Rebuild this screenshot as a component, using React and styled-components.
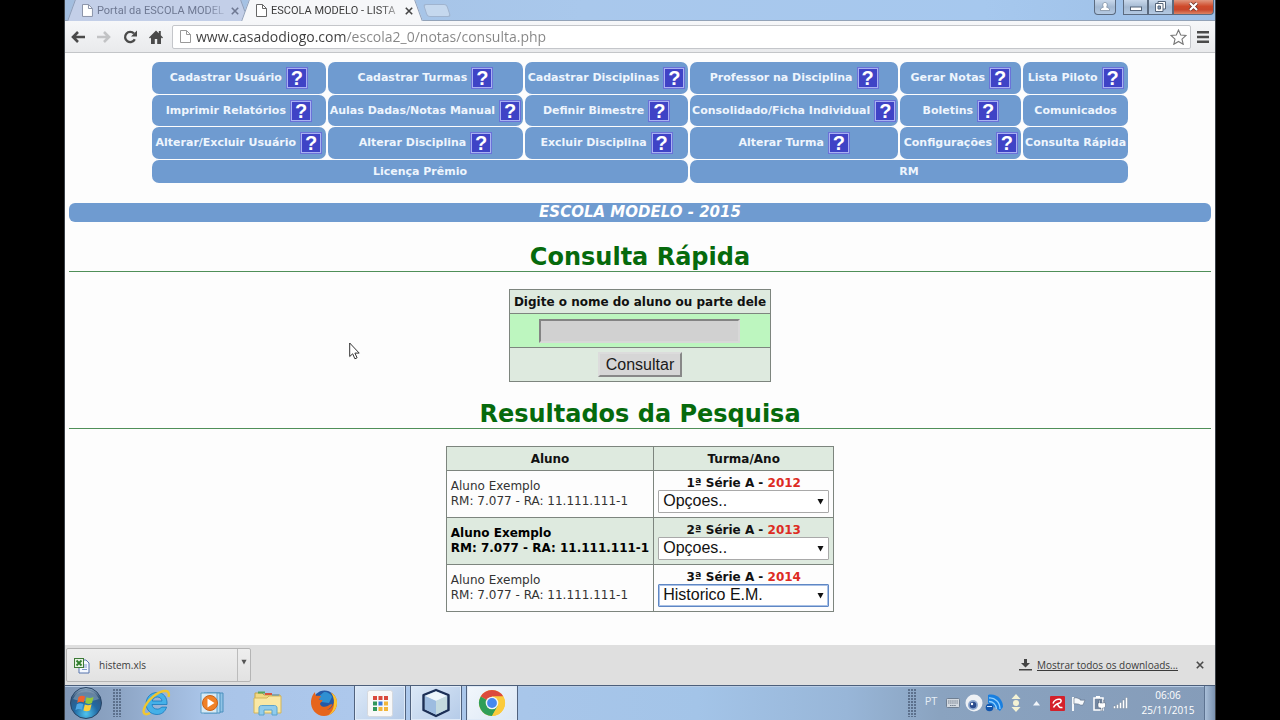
import React, { useState } from "react";
import styled, { createGlobalStyle, css } from "styled-components";

const verdana = `Verdana, "DejaVu Sans", sans-serif`;
const segoe = `"Segoe UI", "Open Sans", sans-serif`;
const arial = `Arial, "Liberation Sans", sans-serif`;

const GlobalStyle = createGlobalStyle`
  * { box-sizing: border-box; }
  body { margin: 0; background: #000; font-family: ${verdana}; }
  button, input, select { font-family: inherit; margin: 0; }
`;

const Screen = styled.div`
  display: flex;
  flex-direction: column;
  min-height: 100vh;
  margin: 0 5%;
  padding: 0 1px;
  background: #3a3f45;
`;

/* ---------- browser chrome ---------- */

const TabStrip = styled.header`
  display: flex;
  align-items: flex-start;
  height: 21px;
  padding-left: 6px;
  background: linear-gradient(90deg, #a3bedf, #a9c8ec 45%, #a6c8ee 80%, #9dbfe6);
  box-shadow: inset 0 -1px #93a3b8;
  overflow: hidden;
`;

const Tab = styled.div`
  position: relative;
  z-index: ${(p) => (p.$active ? 1 : 0)};
  display: flex;
  align-items: center;
  gap: 4px;
  width: 174px;
  height: 21px;
  padding: 0 3px 0 11px;
  color: ${(p) => (p.$active ? "#3c3c3c" : "#6e7892")};

  &::before,
  &::after {
    content: "";
    position: absolute;
    z-index: -1;
    top: 0;
    bottom: 0;
    width: 55%;
    background: ${(p) => (p.$active ? "#f6f7f9" : "#c3cfe8")};
  }
  &::before {
    left: 0;
    transform: skewX(-20deg);
    border-left: 1px solid #8c9db8;
  }
  &::after {
    right: 0;
    transform: skewX(20deg);
    border-right: 1px solid #8c9db8;
  }
`;

const TabTitle = styled.a`
  flex: 1;
  white-space: nowrap;
  font: 11px/20px "Segoe UI", Roboto, sans-serif;
  color: inherit;
  text-decoration: none;
  mask-image: linear-gradient(90deg, #000 86%, rgba(0, 0, 0, 0.3));
`;

const IconButton = styled.button`
  display: flex;
  align-items: center;
  justify-content: center;
  flex: none;
  width: ${(p) => p.$size}px;
  height: ${(p) => p.$size}px;
  padding: 0;
  border: 0;
  background: none;
  color: ${(p) => p.$tone || "#4a4a4a"};
`;

const NewTab = styled.button`
  width: 24px;
  height: 13px;
  margin: 4px 0 0 6px;
  padding: 0;
  border: 1px solid #a0b4cf;
  border-radius: 3px;
  background: #c5d8ee;
  transform: skewX(18deg);
`;

const WindowControls = styled.div`
  display: flex;
  margin-left: auto;
  padding-right: 1px;
`;

const WindowButton = styled.button`
  display: flex;
  align-items: center;
  justify-content: center;
  width: ${(p) => (p.$close ? 41 : p.$user ? 22 : 25)}px;
  height: 15px;
  margin-right: ${(p) => (p.$user ? 7 : 0)}px;
  padding: 0 0 2px;
  border: 1px solid #5b6b80;
  border-top: 0;
  border-radius: ${(p) => (p.$user ? "0 0 4px 4px" : p.$close ? "0 0 4px 0" : "0")};
  background: ${(p) =>
    p.$close
      ? "linear-gradient(#e0977f, #cf4a2b 45%, #c8472c 70%, #dc8566)"
      : "linear-gradient(#c9d9ec, #a4b9d2 50%, #b3c9e2)"};
`;

const Toolbar = styled.nav`
  display: flex;
  align-items: center;
  height: 32px;
  padding: 0 0 0 5px;
  background: linear-gradient(#f6f7f9, #e9eaec);
  border-bottom: 1px solid #c3c5c8;
`;

const NavButtons = styled.div`
  display: flex;
  gap: 10px;
  margin-right: 8px;
`;

const AddressBar = styled.label`
  display: flex;
  flex: 1;
  align-items: center;
  gap: 5px;
  height: 24px;
  padding: 0 3px 0 7px;
  border: 1px solid #c4c6ca;
  border-radius: 2px;
  background: #fff;
`;

const Address = styled.input`
  flex: 1;
  min-width: 0;
  height: 20px;
  padding: 0;
  border: 0;
  outline: 0;
  font: 14px/20px ${segoe};
  color: #444;
  background: linear-gradient(90deg, #3c3c3c 150px, #858585 150px);
  -webkit-background-clip: text;
  background-clip: text;
  -webkit-text-fill-color: transparent;
`;

/* ---------- page ---------- */

const Page = styled.main`
  position: relative;
  flex: 1;
  padding: 9px 4px 16px;
  background: #fdfdfd;
`;

const Menu = styled.nav`
  display: grid;
  grid-template-columns: 174fr 196fr 163fr 209fr 121fr 105fr;
  grid-template-rows: 32px 31px 32px 23px;
  gap: 1px 2px;
  max-width: 976px;
  margin: 0 auto 20px;
`;

const MenuCell = styled.div`
  display: flex;
  align-items: center;
  justify-content: center;
  gap: 4px;
  grid-column: span ${(p) => p.$span || 1};
  border-radius: 7px;
  background: #6f9bd0;
`;

const MenuLink = styled.a`
  font-size: 11px;
  font-weight: bold;
  line-height: 16px;
  white-space: nowrap;
  color: #eef5fd;
  text-decoration: none;
`;

const HelpButton = styled.button`
  width: 22px;
  height: 22px;
  padding: 0;
  border: 1px solid #6a72d8;
  box-shadow: inset 0 0 0 1px #a9b0f2;
  background: #3f43c6;
  font: bold 20px/20px ${arial};
  color: #fff;
`;

const SchoolBar = styled.div`
  height: 19px;
  margin-bottom: 19px;
  border-radius: 6px;
  background: #6f9bd0;
  text-align: center;
  font-size: 15px;
  font-style: italic;
  font-weight: bold;
  line-height: 19px;
  color: #fff;
`;

const Heading = styled.h1`
  height: 31px;
  margin: 0 0 17px;
  border-bottom: 1px solid #4f8f58;
  text-align: center;
  font-size: 24px;
  line-height: 32px;
  color: #066a0c;
`;

const DataTable = styled.table`
  margin: 0 auto 16px;
  border-collapse: collapse;
  font-size: 12px;
  line-height: 14px;
  color: #111;

  th,
  td {
    padding: 0 4px;
    border: 1px solid #7d857e;
  }
  th {
    height: 24px;
    background: #deeadf;
  }
`;

const FormCell = styled.td`
  height: 34px;
  text-align: center;
  background: ${(p) => (p.$field ? "#bdf6bf" : "#deeadf")};
`;

const NameInput = styled.input`
  display: block;
  width: 201px;
  height: 24px;
  margin: 0 auto;
  padding: 0 3px;
  border: 2px inset #d8d8d8;
  background: #d1d1d1;
  font: 16px ${arial};
`;

const SubmitButton = styled.button`
  display: block;
  width: 84px;
  height: 25px;
  margin: 0 auto;
  padding: 0;
  border: 2px outset #dcdcdc;
  background: #d6d6d6;
  font: 16px/20px ${arial};
  color: #1a1a1a;
`;

const ResultRow = styled.tr`
  height: 47px;
  background: ${(p) => (p.$highlight ? "#deeadf" : "#fdfdfd")};
`;

const StudentCell = styled.td`
  width: 206px;
  white-space: nowrap;
  line-height: 15px;
  ${(p) =>
    p.$highlight
      ? css`
          font-weight: bold;
          color: #000;
        `
      : css`
          color: #333;
        `}
`;

const ClassCell = styled.td`
  width: 180px;
  text-align: center;
`;

const ClassLabel = styled.label`
  display: block;
  font-weight: bold;
`;

const Year = styled.span`
  color: #dd2a22;
`;

const SelectBox = styled.div`
  display: grid;
  align-items: center;

  > * {
    grid-area: 1 / 1;
  }
  > svg {
    justify-self: end;
    margin-right: 5px;
    pointer-events: none;
  }
`;

const Select = styled.select`
  appearance: none;
  width: 100%;
  height: 23px;
  padding: 0 20px 0 4px;
  border: 1px solid ${(p) => (p.$focused ? "#5f87c4" : "#a9a9a9")};
  box-shadow: ${(p) => (p.$focused ? "inset 0 0 0 1px #a9c1e6" : "none")};
  border-radius: 1px;
  outline: 0;
  background: #fff;
  font: 16px/20px ${arial};
  color: #111;
`;

const Pointer = styled.svg`
  position: absolute;
  left: 284px;
  top: 289px;
`;

/* ---------- download shelf ---------- */

const Shelf = styled.section`
  display: flex;
  align-items: center;
  height: 40px;
  padding: 0 8px 0 1px;
  background: #dfdfdf;
`;

const Download = styled.div`
  display: flex;
  width: 185px;
  height: 34px;
  border: 1px solid #b4b4b4;
  border-radius: 2px;
  background: linear-gradient(#eeeeee, #e2e2e2);
`;

const DownloadFile = styled.button`
  display: flex;
  flex: 1;
  align-items: center;
  gap: 9px;
  padding: 0 6px;
  border: 0;
  border-right: 1px solid #bcbcbc;
  background: none;
  font: 10px/16px ${segoe};
  color: #3b3b3b;
`;

const DownloadMenu = styled.button`
  width: 12px;
  padding: 0 0 9px;
  border: 0;
  background: none;
`;

const ShelfLink = styled.a`
  display: flex;
  align-items: center;
  gap: 5px;
  margin: 0 15px 0 auto;
  font: 10px/16px ${segoe};
  color: #3b3b3b;
`;

/* ---------- taskbar ---------- */

const Taskbar = styled.footer`
  display: flex;
  align-items: center;
  height: 35px;
  border-top: 1px solid #4c5f7b;
  box-shadow: inset 0 1px #b9cde6;
  background: linear-gradient(90deg, #8097b5 0, #8ea6c6 5%, #a9c4e8 12%, #adc8ec 25%, #a3c4e8 55%, #98b6d8 68%, #8aa3c0 76%, #859cb9);
`;

const StartButton = styled.button`
  display: flex;
  width: 34px;
  height: 34px;
  margin: 0 10px 0 4px;
  padding: 0;
  border: 0;
  background: none;
`;

const Grip = styled.div`
  width: 9px;
  height: 28px;
  background: radial-gradient(circle at 1px 1px, #5c708c 1px, transparent 1px) 0 0 / 3px 3px;
`;

const Apps = styled.div`
  display: flex;
  gap: 4px;
  margin-left: 8px;
`;

const AppButton = styled.button`
  display: flex;
  align-items: center;
  justify-content: center;
  width: 52px;
  height: 34px;
  padding: 0;
  border: 0 solid #50627e;
  border-width: ${(p) => (p.$open ? "0 1px" : "0")};
  box-shadow: ${(p) => (p.$open ? "inset 0 0 0 1px #dfeaf7" : "none")};
  background: ${(p) =>
    p.$current
      ? "linear-gradient(135deg, #f2f7fc, #dbe7f5)"
      : p.$open
        ? "linear-gradient(135deg, #dbe8f7, #b5cbe8)"
        : "none"};
`;

const Tray = styled.div`
  display: flex;
  align-items: center;
  gap: 2px;
  margin-left: auto;
`;

const Language = styled.button`
  width: 22px;
  padding: 0 0 4px 2px;
  border: 0;
  background: none;
  font: 11px/14px ${segoe};
  color: #e4ecf5;
`;

const Clock = styled.time`
  display: block;
  width: 68px;
  margin-left: 2px;
  text-align: center;
  white-space: pre-line;
  font: 10px/15px ${segoe};
  color: #fff;
`;

const ShowDesktop = styled.button`
  width: 11px;
  height: 34px;
  padding: 0;
  border: 0;
  border-left: 1px solid #5d7391;
  background: linear-gradient(90deg, #a9bfd9, #7b92b0);
`;

/* ---------- drawings ---------- */

const PageIcon = ({ tone = "#777" }) => (
  <svg width="11" height="13" viewBox="0 0 11 13" fill="#fff" stroke={tone}>
    <path d="M.5.5h6l4 4v8H.5z" />
    <path d="M6.5.5v4h4" fill="none" />
  </svg>
);

const CloseIcon = () => (
  <svg width="8" height="8" viewBox="0 0 8 8" stroke="currentColor" strokeWidth="1.6">
    <path d="M.8.8l6.4 6.4M7.2.8L.8 7.2" />
  </svg>
);

const ArrowIcon = ({ flip }) => (
  <svg width="14" height="12" viewBox="0 0 14 12" fill="none" stroke="currentColor" strokeWidth="2.600">
    <path d={flip ? "M0 6h12M7 1l5 5-5 5" : "M14 6H2M7 1L2 6l5 5"} />
  </svg>
);

const ReloadIcon = () => (
  <svg width="15" height="14" viewBox="0 0 15 14" fill="none">
    <path d="M11.8 9.2A5.1 5.1 0 1 1 11 3.6" stroke="currentColor" strokeWidth="2.3" />
    <path d="M14 .5v6H8z" fill="currentColor" />
  </svg>
);

const HomeIcon = () => (
  <svg width="14" height="14" viewBox="0 0 14 14" fill="currentColor">
    <path d="M7 .5L0 7.4l1 1 1-.9V14h3.800V9h2.400v5H12V7.500l1 .9 1-1-2.200-2.200V1H9.800v2.300z" />
  </svg>
);

const StarIcon = () => (
  <svg width="17" height="16" viewBox="0 0 17 16" fill="#fff" stroke="#777" strokeWidth="1.1">
    <path d="M8.500 1l2.200 5 5.300.5-4 3.600 1.200 5.200-4.700-2.800-4.700 2.800L5 10.100 1 6.500 6.300 6z" />
  </svg>
);

const BarsIcon = () => (
  <svg width="12" height="12" viewBox="0 0 12 12" fill="#4a4a4a">
    <path d="M0 0h12v2.500H0zM0 4.700h12v2.500H0zM0 9.400h12v2.500H0z" />
  </svg>
);

const DownTriangle = ({ size = 7, tone = "#111" }) => (
  <svg width={size} height={size} viewBox="0 0 7 7" fill={tone}>
    <path d="M.5 1h6L3.500 6.500z" />
  </svg>
);

const ExcelIcon = () => (
  <svg width="17" height="17" viewBox="0 0 17 17">
    <path d="M6 3h7l3 3v10H6z" fill="#f4f8ff" stroke="#5674ad" />
    <path d="M11 8h3M11 10h3M9 12.500h5" stroke="#7f9acb" />
    <rect x="1.500" y="1.500" width="9" height="9" fill="#e6f3e2" stroke="#3d7a37" />
    <path d="M3.500 3.500l5 5M8.500 3.500l-5 5" stroke="#2f7d2c" strokeWidth="1.800" />
  </svg>
);

const SaveIcon = () => (
  <svg width="13" height="12" viewBox="0 0 13 12" fill="#444">
    <path d="M5 0h3v4h3L6.500 8.500 2 4h3zM0 10h13v1.600H0z" />
  </svg>
);

const StartOrb = () => (
  <svg width="34" height="34" viewBox="0 0 34 34">
    <defs>
      <radialGradient id="orb" cx=".5" cy=".85" r=".85">
        <stop offset="0" stopColor="#4fc4ee" />
        <stop offset=".45" stopColor="#2169a3" />
        <stop offset=".8" stopColor="#33587f" />
        <stop offset="1" stopColor="#9fb6cc" />
      </radialGradient>
    </defs>
    <circle cx="17" cy="17" r="15.500" fill="url(#orb)" stroke="#2a4566" />
    <path d="M4 13a14 14 0 0 1 26 0c-8 3-18 3-26 0z" fill="#fff" opacity=".25" />
    <path d="M9.500 11c2.300-1.600 4.500-1.500 6.600-.4L14.700 16.500c-2.200-1-4.300-1-6.500.4z" fill="#ee6330" />
    <path d="M17.500 11.200c2.300 1 4.300 1 7-.3l-1.500 6c-2.200 1.300-4.400 1.300-6.800.2z" fill="#94c83c" />
    <path d="M7.800 18.300c2.200-1.400 4.300-1.400 6.500-.4l-1.400 5.900c-2.200-1-4.300-1-6.500.4z" fill="#4fa8e4" />
    <path d="M15.800 18.500c2.300 1 4.400 1 6.800-.2l-1.500 5.900c-2.200 1.300-4.400 1.300-6.700.3z" fill="#fccf3a" />
  </svg>
);

const ExplorerE = () => (
  <svg width="30" height="28" viewBox="0 0 30 28" fill="none">
    <path d="M26 15.500H11c.3 3 2.400 4.600 5.300 4.600 2 0 3.300-.7 4.300-2h5c-1.500 4.700-5 7.400-9.500 7.400-6.400 0-11-4.500-11-10.800C5.100 8.200 9.700 3.500 16.200 3.500 22.500 3.500 26.600 8.500 26 15.500zM21 12c-.4-2.500-2.100-4-4.700-4s-4.500 1.500-5 4z" fill="#45b0e8" stroke="#1878bd" strokeWidth=".8" />
    <path d="M27.500 8c1-3.500 0-6-3-6C17 2 6 11 3 20c-1.500 5 1.500 6.500 6 4" stroke="#f1c62f" strokeWidth="2.400" />
  </svg>
);

const PlayerIcon = () => (
  <svg width="28" height="26" viewBox="0 0 28 26">
    <path d="M9 3h16v19H9z" fill="#8fc3e6" stroke="#4a8fbd" />
    <path d="M6 3h16v20H6z" fill="#b4dbf2" stroke="#4a8fbd" />
    <path d="M3 3h16v20H3z" fill="#d6eaf5" stroke="#5d9cc5" />
    <circle cx="12" cy="13" r="7.500" fill="#f08126" stroke="#c9621a" />
    <path d="M9.500 8.500l7 4.500-7 4.500z" fill="#fff" />
  </svg>
);

const FolderIcon = () => (
  <svg width="30" height="28" viewBox="0 0 30 28">
    <path d="M2 4h7l2 2h16v17H2z" fill="#f2d984" stroke="#c7a545" />
    <path d="M5 2.500h7v2H5z" fill="#57a45a" />
    <path d="M12 4h7v2h-7z" fill="#d8553f" />
    <path d="M19 5.500h7v2h-7z" fill="#4c93cf" />
    <path d="M1 9h13l2-2h12v17H1z" fill="#f9e8a5" stroke="#d3b558" />
    <path d="M6 26v-7c0-1.500 1-2.500 2.500-2.500h13c1.500 0 2.500 1 2.500 2.500v7h-5v-5h-8v5z" fill="#8fcbec" stroke="#5ba3cd" />
  </svg>
);

const FirefoxIcon = () => (
  <svg width="28" height="28" viewBox="0 0 28 28">
    <circle cx="14.500" cy="13" r="11.500" fill="#2559a6" />
    <path d="M14 3c4 0 7 2 8 5l-3 6-8-1-3-5z" fill="#2f8fd2" />
    <path d="M1 12c.5-4 2-7 4-9 0 2 .5 3 1.500 4 1.500-.5 3-.3 4.500.3-.5 1.500-2 2-2.200 3.200l3.700.8c-.5 2-2.500 2-2.500 3.700 1 3 5 3.500 7.500 2 2-1.200 3-2.500 5-1.500-2 4-5 6-9 6 7 0 10-4 10.500-10 0-3-1-5.500-3-8 4 2.500 6.300 6 6 11C26.500 22 21 27 14 27 6 27 .5 20 1 12z" fill="#e6651c" />
    <path d="M21 3.500c4 2.500 6.300 6 6 11C26.500 20 23 24.500 18 26.500c4-3.500 6-7 6-13 0-4-1-7-3-10z" fill="#fbc530" />
  </svg>
);

const AppGrid = () => {
  const tones = ["#d9483b", "#d9483b", "#d9483b", "#32975b", "#3b78d8", "#f2b63a", "#32975b", "#f2b63a", "#f2b63a"];
  return (
    <svg width="26" height="27" viewBox="0 0 26 27">
      <rect x=".5" y=".5" width="25" height="26" rx="2" fill="#f8f8f8" stroke="#d5d9de" />
      {tones.map((t, i) => (
        <rect key={i} x={6 + (i % 3) * 5.500} y={6 + Math.floor(i / 3) * 5.500} width="4" height="4" fill={t} />
      ))}
    </svg>
  );
};

const CubeIcon = () => (
  <svg width="30" height="30" viewBox="0 0 30 30" strokeLinejoin="round">
    <path d="M15 2l12.500 5v15L15 28 2.500 22V7z" fill="#b9d0e8" stroke="#1c2f55" strokeWidth="2.400" />
    <path d="M15 3.500L26 8l-11 5L4 8z" fill="#eef6fb" />
    <path d="M4 8l11 5v13.500L4 21.300z" fill="#9dbce0" />
    <path d="M26 8l-11 5v13.500l11-5.200z" fill="#c4dadf" />
  </svg>
);

const ChromeIcon = () => (
  <svg width="28" height="28" viewBox="0 0 28 28">
    <circle cx="14" cy="14" r="13" fill="#fbcb3c" />
    <path d="M14 14L2.740 7.500A13 13 0 0 1 25.260 7.500H14z" fill="#dc4a3c" />
    <path d="M14 14L2.740 7.500A13 13 0 0 0 14 27l5.600-9.800z" fill="#2f9e58" />
    <path d="M14 7.500h11.260A13 13 0 0 1 14 27l5.600-9.700z" fill="#fbcb3c" />
    <circle cx="14" cy="14" r="6.300" fill="#f3f6f4" />
    <circle cx="14" cy="14" r="4.900" fill="#4688ee" />
  </svg>
);

const trayIcons = [
  ["Teclado", <svg width="14" height="10" viewBox="0 0 14 10"><rect x=".5" y=".5" width="13" height="9" rx="1" fill="#d3d9e0" stroke="#6f7f92" /><path d="M2 3h10M2 5h10M4 7.500h6" stroke="#75808f" strokeDasharray="1.500 .6" /></svg>],
  ["Webcam", <svg width="18" height="18" viewBox="0 0 18 18"><circle cx="9" cy="9" r="8.500" fill="#eef1f5" /><circle cx="8" cy="11" r="5" fill="#8ea8cf" /><circle cx="8" cy="11" r="3.300" fill="#2b4c8e" /><circle cx="7" cy="10" r="1.200" fill="#fff" /></svg>],
  ["Rede", <svg width="19" height="18" viewBox="0 0 19 18"><path d="M3 1c8-2 15 4 15 12l-3 4L3 9z" fill="#187fe0" /><path d="M4 4c6-.5 11 4 11 11M4 7.500c4 0 7 3 7.500 7.500" fill="none" stroke="#8fd0ff" strokeWidth="1.300" /><circle cx="4.500" cy="13.500" r="3.800" fill="#1256ad" /><path d="M2 12.500h5" stroke="#cfe6ff" /></svg>],
  ["Atalhos", <svg width="10" height="18" viewBox="0 0 10 18" fill="#f4f2d4"><path d="M5 0l4.500 5h-9zM5 18l4.500-5h-9z" /><circle cx="5" cy="9" r="3" /></svg>],
  ["Mostrar ícones ocultos", <svg width="7" height="5" viewBox="0 0 7 5"><path d="M3.500 0L7 4.500H0z" fill="#f2f6fa" /></svg>],
  ["Antivírus", <svg width="15" height="15" viewBox="0 0 15 15"><rect width="15" height="15" rx="1" fill="#d4202a" /><path d="M3 7.500C4 4.500 7 3 9.500 3.300c2.500.4 2 3.200-.5 3.900C6.500 8 4.500 9 3.500 11.500M7.500 8c.7 2.300 2.500 4 5 3.500" fill="none" stroke="#fff" strokeWidth="1.500" /></svg>],
  ["Central de ações", <svg width="15" height="15" viewBox="0 0 15 15"><path d="M2 1v14" stroke="#fff" strokeWidth="1.800" /><path d="M3 2c3-1 4 1 6 .8V4c2 .2 3.500.3 5 0l-2 5c-2 .3-3 0-4-.8-2 0-3-.8-5-.2z" fill="#f6f9fc" stroke="#5f6f84" strokeWidth=".6" /></svg>],
  ["Energia", <svg width="14" height="15" viewBox="0 0 14 15"><rect x="1" y="2" width="9" height="12" fill="#7286a0" stroke="#fff" strokeWidth="1.500" /><path d="M3 0h4v2H3z" fill="#fff" /><path d="M6 4v3h-1v3c0 1.500 1.500 2 3 2v3h1.500v-3c1.500 0 3-.5 3-2V7h-1V4h-1v3H7V4z" fill="#fff" stroke="#4e5f76" strokeWidth=".5" /></svg>],
  ["Sinal", <svg width="15" height="12" viewBox="0 0 15 12" fill="#fff" stroke="#54657c" strokeWidth=".3"><path d="M.5 9h2v2.500h-2zM3.500 7.500h2v4h-2zM6.500 5.500h2v6h-2zM9.500 3h2v8.500h-2zM12.500.5h2v11h-2z" /></svg>],
];

/* ---------- content ---------- */

const menuItems = [
  ["Cadastrar Usuário", true],
  ["Cadastrar Turmas", true],
  ["Cadastrar Disciplinas", true],
  ["Professor na Disciplina", true],
  ["Gerar Notas", true],
  ["Lista Piloto", true],
  ["Imprimir Relatórios", true],
  ["Aulas Dadas/Notas Manual", true],
  ["Definir Bimestre", true],
  ["Consolidado/Ficha Individual", true],
  ["Boletins", true],
  ["Comunicados", false],
  ["Alterar/Excluir Usuário", true],
  ["Alterar Disciplina", true],
  ["Excluir Disciplina", true],
  ["Alterar Turma", true],
  ["Configurações", true],
  ["Consulta Rápida", false],
  ["Licença Prêmio", false, 3],
  ["RM", false, 3],
];

const results = [
  { grade: "1ª Série A", year: "2012", option: "Opçoes.." },
  { grade: "2ª Série A", year: "2013", option: "Opçoes..", highlight: true },
  { grade: "3ª Série A", year: "2014", option: "Historico E.M.", focused: true },
];

const taskApps = [
  ["Internet Explorer", <ExplorerE />],
  ["Media Player", <PlayerIcon />],
  ["Explorador", <FolderIcon />],
  ["Firefox", <FirefoxIcon />],
  ["Aplicativos", <AppGrid />, true],
  ["NetBeans", <CubeIcon />, true],
  ["Chrome", <ChromeIcon />, true, true],
];

function BrowserTab({ title, active }) {
  return (
    <Tab $active={active}>
      <PageIcon tone={active ? "#666" : "#8a93a8"} />
      <TabTitle href="#">{title}</TabTitle>
      <IconButton $size={14} $tone={active ? "#444" : "#6e7892"} aria-label="Fechar guia">
        <CloseIcon />
      </IconButton>
    </Tab>
  );
}

function Result({ index, grade, year, option, highlight, focused }) {
  const [value, setValue] = useState(option);
  const id = `turma-${index}`;
  return (
    <ResultRow $highlight={highlight}>
      <StudentCell $highlight={highlight}>
        Aluno Exemplo
        <br />
        RM: 7.077 - RA: 11.111.111-1
      </StudentCell>
      <ClassCell>
        <ClassLabel htmlFor={id}>
          {grade} - <Year>{year}</Year>
        </ClassLabel>
        <SelectBox>
          <Select id={id} value={value} $focused={focused} onChange={(e) => setValue(e.target.value)}>
            <option>Opçoes..</option>
            <option>Historico E.M.</option>
          </Select>
          <DownTriangle />
        </SelectBox>
      </ClassCell>
    </ResultRow>
  );
}

export default function App() {
  return (
    <Screen>
      <GlobalStyle />
      <TabStrip>
        <BrowserTab title="Portal da ESCOLA MODEL" />
        <BrowserTab title="ESCOLA MODELO - LISTA" active />
        <NewTab aria-label="Nova guia" />
        <WindowControls>
          <WindowButton $user aria-label="Usuário">
            <svg width="10" height="9" viewBox="0 0 10 9" fill="#fff" stroke="#65758a" strokeWidth=".6">
              <path d="M.5 8.500V7c1-1.200 2-1.500 3-1.800C2 3 3 .4 5 .4S8 3 6.500 5.200c1 .3 2 .6 3 1.800v1.500z" />
            </svg>
          </WindowButton>
          <WindowButton aria-label="Minimizar">
            <svg width="12" height="9" viewBox="0 0 12 9">
              <rect x=".5" y="5" width="11" height="3.500" fill="#fff" stroke="#55657a" />
            </svg>
          </WindowButton>
          <WindowButton aria-label="Restaurar">
            <svg width="11" height="11" viewBox="0 0 11 11" fill="#fff" stroke="#55657a">
              <path d="M3 .5h7.500V8H3z" />
              <path d="M.5 2.500H8v8H.5z" />
              <path d="M3 5h2.500v3H3z" fill="#8ba0ba" />
            </svg>
          </WindowButton>
          <WindowButton $close aria-label="Fechar">
            <svg width="11" height="9" viewBox="0 0 11 9">
              <path d="M2 1l7 7M9 1L2 8" stroke="#6c3226" strokeWidth="3.600" />
              <path d="M2 1l7 7M9 1L2 8" stroke="#fff" strokeWidth="2.200" />
            </svg>
          </WindowButton>
        </WindowControls>
      </TabStrip>

      <Toolbar>
        <NavButtons>
          <IconButton $size={16} aria-label="Voltar"><ArrowIcon /></IconButton>
          <IconButton $size={16} $tone="#c2c3c5" aria-label="Avançar"><ArrowIcon flip /></IconButton>
          <IconButton $size={16} aria-label="Recarregar"><ReloadIcon /></IconButton>
          <IconButton $size={16} aria-label="Início"><HomeIcon /></IconButton>
        </NavButtons>
        <AddressBar>
          <PageIcon tone="#999" />
          <Address
            aria-label="Endereço"
            spellCheck={false}
            defaultValue="www.casadodiogo.com/escola2_0/notas/consulta.php"
          />
          <IconButton $size={17} aria-label="Favoritos"><StarIcon /></IconButton>
        </AddressBar>
        <IconButton $size={24} aria-label="Menu"><BarsIcon /></IconButton>
      </Toolbar>

      <Page>
        <Menu>
          {menuItems.map(([label, help, span]) => (
            <MenuCell key={label} $span={span}>
              <MenuLink href="#">{label}</MenuLink>
              {help && <HelpButton>?</HelpButton>}
            </MenuCell>
          ))}
        </Menu>

        <SchoolBar>ESCOLA MODELO - 2015</SchoolBar>

        <Heading>Consulta Rápida</Heading>
        <form onSubmit={(e) => e.preventDefault()}>
          <DataTable>
            <tbody>
              <tr>
                <th>
                  <label htmlFor="nome">Digite o nome do aluno ou parte dele</label>
                </th>
              </tr>
              <tr>
                <FormCell $field>
                  <NameInput id="nome" type="text" />
                </FormCell>
              </tr>
              <tr>
                <FormCell>
                  <SubmitButton>Consultar</SubmitButton>
                </FormCell>
              </tr>
            </tbody>
          </DataTable>
        </form>

        <Heading as="h2">Resultados da Pesquisa</Heading>
        <DataTable>
          <thead>
            <tr>
              <th>Aluno</th>
              <th>Turma/Ano</th>
            </tr>
          </thead>
          <tbody>
            {results.map((r, i) => (
              <Result key={r.year} index={i} {...r} />
            ))}
          </tbody>
        </DataTable>

        <Pointer width="12" height="18" viewBox="0 0 12 18" aria-hidden="true">
          <path d="M.7 1v13.500l3-2.700 2.200 5 2.200-1-2.200-4.700h4.300z" fill="#fff" stroke="#333" />
        </Pointer>
      </Page>

      <Shelf>
        <Download>
          <DownloadFile>
            <ExcelIcon />
            histem.xls
          </DownloadFile>
          <DownloadMenu aria-label="Opções do download">
            <DownTriangle size={6} tone="#555" />
          </DownloadMenu>
        </Download>
        <ShelfLink href="#">
          <SaveIcon />
          Mostrar todos os downloads...
        </ShelfLink>
        <IconButton $size={14} aria-label="Fechar barra"><CloseIcon /></IconButton>
      </Shelf>

      <Taskbar>
        <StartButton aria-label="Iniciar"><StartOrb /></StartButton>
        <Grip />
        <Apps>
          {taskApps.map(([name, icon, open, current]) => (
            <AppButton key={name} aria-label={name} $open={open} $current={current}>
              {icon}
            </AppButton>
          ))}
        </Apps>
        <Tray>
          <Grip />
          <Language>PT</Language>
          {trayIcons.map(([name, icon]) => (
            <IconButton key={name} $size={19} aria-label={name}>
              {icon}
            </IconButton>
          ))}
          <Clock>{"06:06\n25/11/2015"}</Clock>
          <ShowDesktop aria-label="Mostrar área de trabalho" />
        </Tray>
      </Taskbar>
    </Screen>
  );
}
